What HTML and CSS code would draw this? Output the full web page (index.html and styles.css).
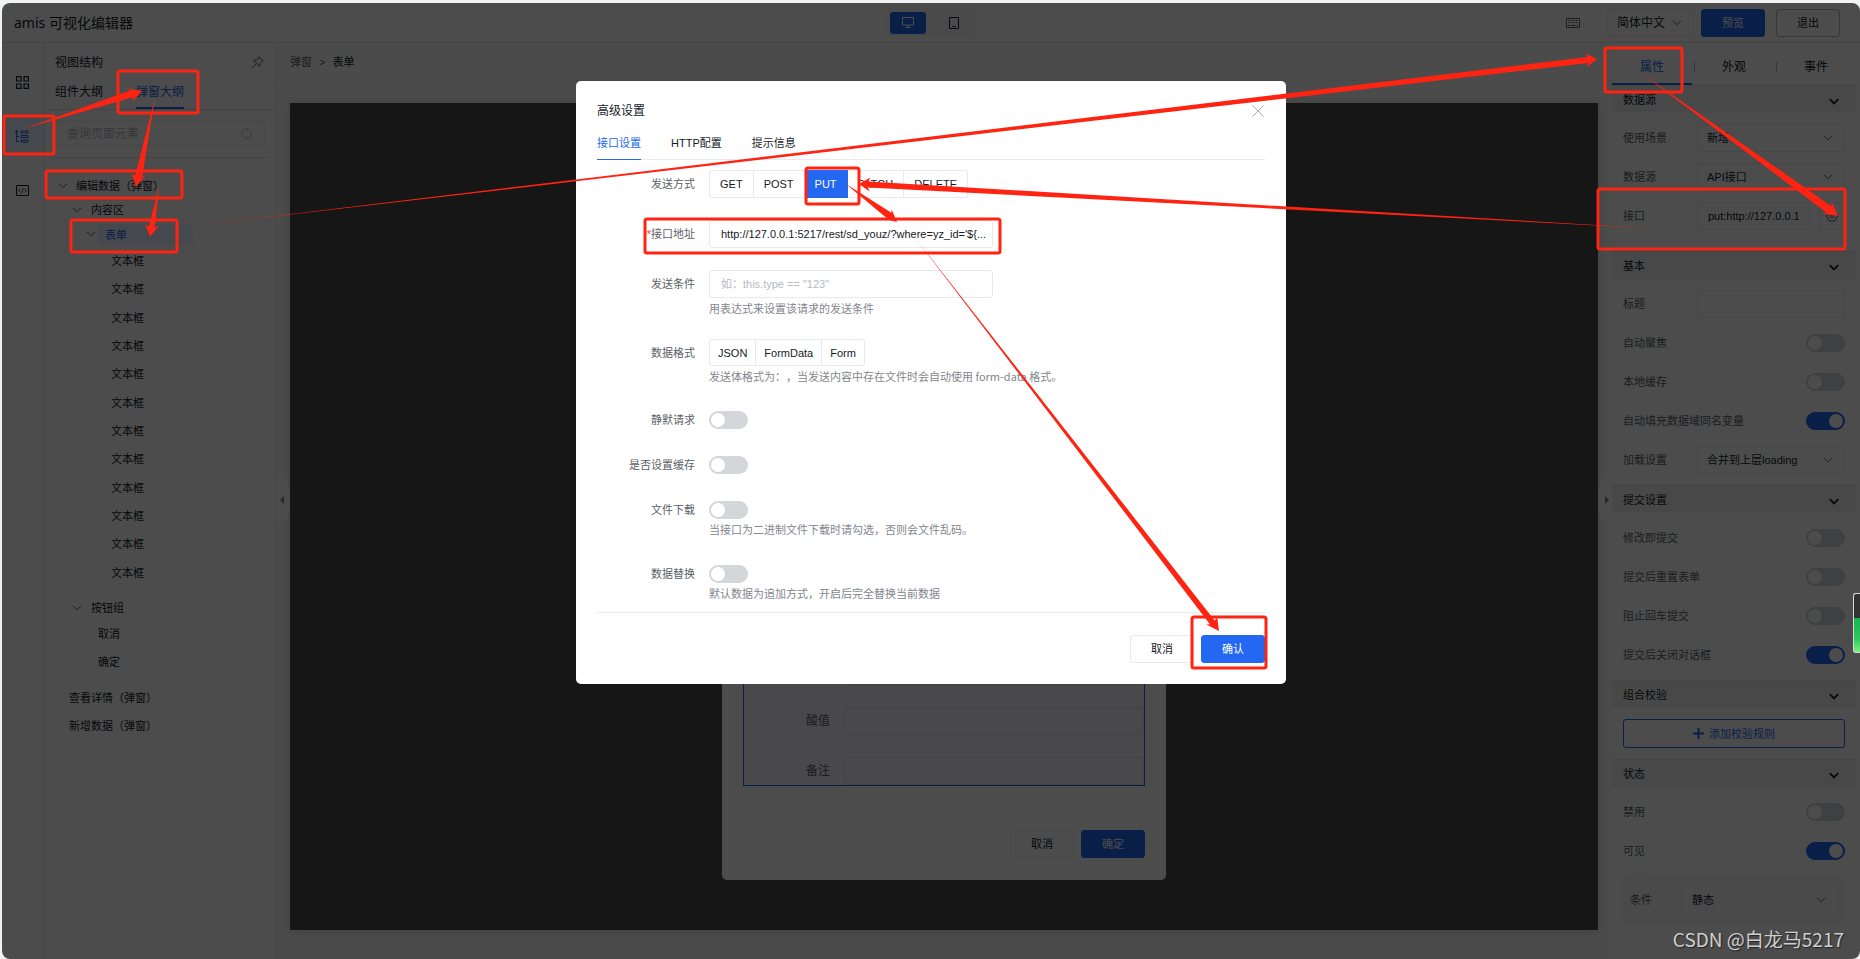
FILE: index.html
```html
<!DOCTYPE html>
<html lang="zh-CN">
<head>
<meta charset="utf-8">
<title>amis 可视化编辑器</title>
<link rel="stylesheet" href="styles.css">
</head>
<body>
<svg class="defs" aria-hidden="true">
  <symbol id="chev" viewBox="0 0 10 6"><path d="M1 .8 5 4.8 9 .8" fill="none" stroke="currentColor"/></symbol>
  <symbol id="chev-bold" viewBox="0 0 10 7"><path d="M.8 1.2 5 5.4 9.200 1.200" fill="none" stroke="currentColor" stroke-width="1.8"/></symbol>
</svg>
<div class="frame">
  <header class="topbar">
    <h1 class="brand">amis 可视化编辑器</h1>
    <div class="device">
      <button class="device-btn on" aria-label="桌面"><svg width="12" height="11" viewBox="0 0 12 11" fill="none" stroke="currentColor"><path d="M.5 .5h11v7.500H.5zM6 8v2.500M3.500 10.500h5"/></svg></button>
      <button class="device-btn" aria-label="平板"><svg width="10" height="12" viewBox="0 0 10 12" fill="none" stroke="currentColor"><path d="M.5 .5h9v11h-9zM3.500 9.500h3"/></svg></button>
    </div>
    <div class="top-actions">
      <svg class="keyboard" width="14" height="10" viewBox="0 0 14 10" fill="none" stroke="currentColor"><path d="M.5 .5h13v9H.5z"/><path d="M2 2.500h10M2 4.500h10" stroke-dasharray="1 .6"/><path d="M2 7.500h1.500M4.500 7.500h5M10.500 7.500H12"/></svg>
      <div class="select lang"><select aria-label="语言"><option>简体中文</option></select><svg class="caret" width="10" height="6"><use href="#chev"/></svg></div>
      <button class="btn primary">预览</button>
      <button class="btn exit">退出</button>
    </div>
  </header>
  <div class="main">
    <nav class="rail">
      <button class="rail-btn" aria-label="组件"><svg width="13" height="13" viewBox="0 0 13 13" fill="none" stroke="currentColor" stroke-width="1.200"><path d="M.6 .6h4.400v4.400H.6zM8 .6h4.400v4.400H8zM.6 8h4.400v4.400H.6zM8 8h4.400v4.400H8z"/></svg></button>
      <button class="rail-btn on" aria-label="大纲"><svg width="14" height="13" viewBox="0 0 14 13" fill="none" stroke="currentColor"><path d="M1.500 1v10.500H4M1.500 6.500H4M6 1h7v2H6zM6 5.500h7v2H6zM6 10h7v2H6z"/><circle cx="1.500" cy="1.500" r="1" fill="currentColor"/></svg></button>
      <button class="rail-btn" aria-label="代码"><svg width="13" height="11" viewBox="0 0 13 11" fill="none" stroke="currentColor"><path d="M.5 .5h12v10H.5z"/><path stroke-width=".8" d="M4.300 3.700l-1.800 1.800 1.800 1.800M8.700 3.700l1.800 1.800-1.800 1.800M7.200 3.200 5.800 7.800"/></svg></button>
    </nav>
    <aside class="outline">
      <div class="outline-head"><h2>视图结构</h2><svg width="13" height="13" viewBox="0 0 13 13" fill="none" stroke="currentColor"><path d="M8 .8 12.200 5 10.800 5.700 9 7.500 8.600 10.400 2.600 4.400 5.500 4 7.300 2.200zM5.500 7.500.8 12.200"/></svg></div>
      <div class="outline-tabs"><button>组件大纲</button><button class="on">弹窗大纲</button></div>
      <label class="search"><input type="text" placeholder="查询页面元素" aria-label="查询页面元素"><svg width="12" height="12" viewBox="0 0 12 12" fill="none" stroke="currentColor"><circle cx="5.500" cy="5.500" r="4.700"/><path d="m9 9 2 2"/></svg></label>
      <div class="tree">
        <div class="node d1"><svg width="10" height="6"><use href="#chev"/></svg><span>编辑数据（弹窗）</span></div>
        <div class="node d2"><svg width="10" height="6"><use href="#chev"/></svg><span>内容区</span></div>
        <div class="node d3"><svg width="10" height="6"><use href="#chev"/></svg><span class="current">表单</span></div>
        <ul class="fields"><li>文本框</li><li>文本框</li><li>文本框</li><li>文本框</li><li>文本框</li><li>文本框</li><li>文本框</li><li>文本框</li><li>文本框</li><li>文本框</li><li>文本框</li><li>文本框</li></ul>
        <div class="node d2 group"><svg width="10" height="6"><use href="#chev"/></svg><span>按钮组</span></div>
        <ul class="actions"><li>取消</li><li>确定</li></ul>
        <ul class="dialogs"><li>查看详情（弹窗）</li><li>新增数据（弹窗）</li></ul>
      </div>
    </aside>
    <section class="workspace">
      <div class="crumbs"><span>弹窗</span><span>&gt;</span><b>表单</b></div>
      <button class="handle left" aria-label="收起左侧"></button>
      <button class="handle right" aria-label="收起右侧"></button>
      <div class="stage">
        <div class="preview">
          <div class="preview-form">
            <div class="preview-row"><input id="p0" aria-label="文本框"></div>
            <div class="preview-row"><label for="p1">酸值</label><input id="p1"></div>
            <div class="preview-row"><label for="p2">备注</label><input id="p2"></div>
          </div>
          <div class="preview-foot"><button class="btn">取消</button><button class="btn primary">确定</button></div>
        </div>
      </div>
    </section>
    <aside class="props">
      <div class="props-tabs"><button class="on">属性</button><button>外观</button><button>事件</button></div>
      <section class="sec data">
        <h3>数据源<svg width="10" height="7"><use href="#chev-bold"/></svg></h3>
        <div class="sec-body">
          <div class="row"><label for="scene">使用场景</label><div class="select"><select id="scene"><option>新增</option></select><svg class="caret" width="10" height="6"><use href="#chev"/></svg></div></div>
          <div class="row"><label for="source">数据源</label><div class="select"><select id="source"><option>API接口</option></select><svg class="caret" width="10" height="6"><use href="#chev"/></svg></div></div>
          <div class="row"><label for="api">接口</label><div class="api"><input id="api" value="put:http://127.0.0.1"><button aria-label="接口设置"><svg width="12" height="12" viewBox="0 0 12 12" fill="none" stroke="currentColor"><path d="M3.200 1h5.600l2.700 5-2.700 5H3.200L.5 6z"/><circle cx="6" cy="6" r="1.800"/></svg></button></div></div>
        </div>
      </section>
      <section class="sec">
        <h3>基本<svg width="10" height="7"><use href="#chev-bold"/></svg></h3>
        <div class="sec-body">
          <div class="row"><label for="ttl">标题</label><input class="text" id="ttl"></div>
          <div class="row"><label for="s1">自动聚焦</label><input id="s1" type="checkbox" class="switch"></div>
          <div class="row"><label for="s2">本地缓存</label><input id="s2" type="checkbox" class="switch"></div>
          <div class="row"><label for="s3">自动填充数据域同名变量</label><input id="s3" type="checkbox" class="switch" checked></div>
          <div class="row"><label for="load">加载设置</label><div class="select"><select id="load"><option>合并到上层loading</option></select><svg class="caret" width="10" height="6"><use href="#chev"/></svg></div></div>
        </div>
      </section>
      <section class="sec">
        <h3>提交设置<svg width="10" height="7"><use href="#chev-bold"/></svg></h3>
        <div class="sec-body">
          <div class="row"><label for="s4">修改即提交</label><input id="s4" type="checkbox" class="switch"></div>
          <div class="row"><label for="s5">提交后重置表单</label><input id="s5" type="checkbox" class="switch"></div>
          <div class="row"><label for="s6">阻止回车提交</label><input id="s6" type="checkbox" class="switch"></div>
          <div class="row"><label for="s7">提交后关闭对话框</label><input id="s7" type="checkbox" class="switch" checked></div>
        </div>
      </section>
      <section class="sec">
        <h3>组合校验<svg width="10" height="7"><use href="#chev-bold"/></svg></h3>
        <div class="sec-body"><button class="add"><svg width="11" height="11" viewBox="0 0 11 11" stroke="currentColor" stroke-width="2"><path d="M5.500 0v11M0 5.500h11"/></svg>添加校验规则</button></div>
      </section>
      <section class="sec">
        <h3>状态<svg width="10" height="7"><use href="#chev-bold"/></svg></h3>
        <div class="sec-body">
          <div class="row"><label for="s8">禁用</label><input id="s8" type="checkbox" class="switch"></div>
          <div class="row"><label for="s9">可见</label><input id="s9" type="checkbox" class="switch" checked></div>
          <div class="cond"><label for="cond">条件</label><div class="select"><select id="cond"><option>静态</option></select><svg class="caret" width="10" height="6"><use href="#chev"/></svg></div></div>
        </div>
      </section>
    </aside>
  </div>

  <div class="mask">
    <div class="modal" role="dialog" aria-labelledby="modal-title">
      <div class="modal-head"><h2 id="modal-title">高级设置</h2><button class="close" aria-label="关闭"><svg width="12" height="12" viewBox="0 0 12 12" stroke="currentColor"><path d="M.5 .5l11 11M11.500 .5l-11 11"/></svg></button></div>
      <div class="modal-tabs"><button class="on">接口设置</button><button>HTTP配置</button><button>提示信息</button></div>
      <form class="form">
        <div class="field"><span class="lab">发送方式</span><div class="seg method"><button type="button">GET</button><button type="button">POST</button><button type="button" class="on">PUT</button><button type="button">PATCH</button><button type="button">DELETE</button></div></div>
        <div class="field"><label class="lab req" for="url">接口地址</label><div class="inp"><input id="url" value="http://127.0.0.1:5217/rest/sd_youz/?where=yz_id='${..."></div></div>
        <div class="field has-help"><label class="lab" for="when">发送条件</label><div class="inp"><input id="when" placeholder="如：this.type == &quot;123&quot;"><p>用表达式来设置该请求的发送条件</p></div></div>
        <div class="field has-help body-type"><span class="lab">数据格式</span><div><div class="seg format"><button type="button">JSON</button><button type="button">FormData</button><button type="button">Form</button></div><p>发送体格式为：，当发送内容中存在文件时会自动使用 form-data 格式。</p></div></div>
        <div class="field sw"><label class="lab" for="m1">静默请求</label><div><input id="m1" type="checkbox" class="switch"></div></div>
        <div class="field sw"><label class="lab" for="m2">是否设置缓存</label><div><input id="m2" type="checkbox" class="switch"></div></div>
        <div class="field sw has-help"><label class="lab" for="m3">文件下载</label><div><input id="m3" type="checkbox" class="switch"><p>当接口为二进制文件下载时请勾选，否则会文件乱码。</p></div></div>
        <div class="field sw has-help"><label class="lab" for="m4">数据替换</label><div><input id="m4" type="checkbox" class="switch"><p>默认数据为追加方式，开启后完全替换当前数据</p></div></div>
      </form>
      <div class="modal-foot"><button class="btn">取消</button><button class="btn primary">确认</button></div>
    </div>
  </div>
</div>

<div class="meter" aria-hidden="true"></div>
<svg class="notes" width="1860" height="959" viewBox="0 0 1860 959" aria-hidden="true">
  <g class="boxes">
    <rect x="4" y="116" width="50" height="38" rx="2"/>
    <rect x="118" y="71" width="80" height="42" rx="2"/>
    <rect x="46" y="171" width="136" height="27" rx="2"/>
    <rect x="71" y="220" width="106" height="32" rx="2"/>
    <rect x="645" y="219" width="355" height="34" rx="2"/>
    <rect x="806" y="168" width="53" height="36" rx="2"/>
    <rect x="1192" y="617" width="74" height="51" rx="2"/>
    <rect x="1605" y="48" width="77" height="44" rx="2"/>
    <rect x="1598" y="189" width="247" height="60" rx="2"/>
  </g>
  <g class="arrows">
    <path transform="translate(142 91) rotate(-17.7)" d="M0 0-14-7-11-4-125 0-11 3-12 7z"/>
    <path transform="translate(136 187) rotate(102)" d="M0 0-14-7-11-4-91 0-11 3-12 7z"/>
    <path transform="translate(150 237) rotate(100.2)" d="M0 0-13-7-10-3-51 0-10 3-12 7z"/>
    <path transform="translate(1597 59) rotate(-6.78)" d="M0 0-11-7-9-3-1414 0-9 3-11 7z"/>
    <path transform="translate(1838 216) rotate(36)" d="M0 0-14-8-11-4-245 0-11 4-14 7z"/>
    <path transform="translate(859 184) rotate(183.200)" d="M0 0-11-7-9-3-797 0-9 3-11 7z"/>
    <path transform="translate(897 222) rotate(36.700)" d="M0 0-12-7-10-4-64 0-10 3-12 5z"/>
    <path transform="translate(1219 631) rotate(52.300)" d="M0 0-12-7-11-3-497 0-11 3-13 6z"/>
  </g>
</svg>
<div class="watermark">CSDN @白龙马5217</div>
</body>
</html>
```
FILE: styles.css
```css
* { box-sizing: border-box; }
body {
  margin: 0;
  padding: 3px 0 0 2px;
  background: #f1f2f2;
  color: #151b26;
  font: 11px/16px "Liberation Sans", "Noto Sans CJK SC", sans-serif;
  text-spacing-trim: space-all;
}
button, input, select { font: inherit; color: inherit; margin: 0; outline: 0; }
button { background: none; border: 0; padding: 0; white-space: nowrap; }
h1, h2, h3, p, ul { margin: 0; padding: 0; font-weight: 400; list-style: none; }
svg { flex: none; display: block; }
.defs { position: absolute; width: 0; height: 0; }

.frame {
  position: relative;
  display: flex;
  flex-direction: column;
  height: calc(100vh - 3px);
  border-radius: 8px;
  overflow: hidden;
  background: #fff;
}

/* top bar */
.topbar {
  display: grid;
  grid-template-columns: 1fr auto 1fr;
  align-items: center;
  height: 40px;
  padding: 0 20px 0 12px;
  border-bottom: 1px solid #e4e5e7;
}
.brand { font: 14px/20px "Noto Sans", "Noto Sans CJK SC", sans-serif; }
.device { display: flex; gap: 10px; padding: 3px; margin-left: 8px; border-radius: 4px; background: #f7f7f9; }
.device-btn { display: grid; place-items: center; width: 36px; height: 22px; border-radius: 3px; }
.device-btn.on { background: #2468f2; color: #fff; }
.top-actions { display: flex; justify-content: flex-end; align-items: center; }
.keyboard { margin-right: 27px; color: #5c5f66; }
.lang { width: 87px; margin-right: 7px; font-size: 12px; }
.top-actions .exit { margin-left: 11px; border-color: #b8babf; }

.btn {
  width: 64px;
  height: 28px;
  border: 1px solid #e8e9eb;
  border-radius: 3px;
  background: transparent;
}
.btn.primary { background: #2468f2; border-color: #2468f2; color: #fff; }

.select { position: relative; height: 28px; }
.select select {
  appearance: none;
  width: 100%;
  height: 100%;
  padding: 0 24px 0 9px;
  border: 1px solid #e8e9eb;
  border-radius: 3px;
  background: transparent;
}
.caret { position: absolute; right: 12px; top: 11px; color: #5c5f66; pointer-events: none; }

.switch {
  appearance: none;
  display: block;
  width: 39px;
  height: 18px;
  padding: 2px;
  border-radius: 9px;
  background: #d4d6d9;
}
.switch::before { content: ""; display: block; width: 14px; height: 14px; border-radius: 50%; background: #fff; }
.switch:checked { background: #2468f2; }
.switch:checked::before { margin-left: auto; }

.main { flex: 1; display: flex; min-height: 0; }

/* icon rail */
.rail { width: 43px; padding-top: 20px; border-right: 1px solid #e4e5e7; display: flex; flex-direction: column; gap: 16px; flex: none; }
.rail-btn { display: grid; place-items: center; height: 38px; width: 100%; padding-right: 2px; }
.rail-btn.on { background: #e6f0ff; color: #2468f2; }

/* outline panel */
.outline { width: 231px; flex: none; padding-top: 10px; border-right: 1px solid #eee; }
.outline-head { display: flex; justify-content: space-between; align-items: center; height: 19px; padding: 0 11px 0 10px; color: #5c5f66; }
.outline-head h2 { font-size: 12px; color: #151b26; }
.outline-tabs { display: flex; gap: 33px; height: 38px; padding: 0 10px; border-bottom: 1px solid #e4e5e7; font-size: 12px; }
.outline-tabs button { padding-top: 4px; border-bottom: 2px solid transparent; }
.outline-tabs .on { color: #2468f2; border-color: #2468f2; }
.search { display: flex; align-items: center; height: 25px; margin: 11px 10px; padding: 0 11px; border: 1px solid #e8e9eb; border-radius: 3px; color: #b8babf; font-size: 12px; }
.search input { flex: 1; min-width: 0; border: 0; padding: 0; background: none; }
.search input::placeholder { color: #b8babf; }
.tree { margin: 0 5px; padding-top: 16px; border-top: 1px solid #e4e5e7; }
.node { display: flex; align-items: center; height: 24px; color: #5c5f66; }
.node span { color: #151b26; }
.d1 { padding-left: 8px; gap: 8px; }
.d2 { padding-left: 22px; gap: 9px; }
.d3 { padding-left: 36px; gap: 2px; }
.node .current { width: 95px; padding: 3px 7px 2px; border-radius: 3px; background: #e6f0ff; color: #2468f2; }
.fields { display: grid; grid-template-rows: repeat(12, 1fr); align-items: center; height: 340px; margin-top: 1px; padding-left: 61px; }
.group { margin-top: 9px; }
.actions { padding-left: 48px; line-height: 28px; }
.dialogs { margin-top: 8px; padding-left: 19px; line-height: 28px; }

/* workspace */
.workspace { position: relative; flex: 1; min-width: 0; display: flex; flex-direction: column; background: #fafafa; }
.crumbs { display: flex; align-items: center; gap: 7px; height: 38px; padding-left: 14px; border-bottom: 1px solid #eeeff0; color: #5c5f66; }
.crumbs b { color: #151b26; font-weight: 400; }
.stage {
  flex: 1;
  display: flex;
  justify-content: center;
  align-items: flex-end;
  margin: 22px 14px 29px;
  padding-bottom: 50px;
  background: #4b4b4b;
  box-shadow: 0 2px 10px #d4d4d4;
}
.preview { width: 444px; padding: 21px 21px 22px; border-radius: 5px; background: #fff; }
.preview-form { display: flex; flex-direction: column; gap: 22px; border: 1px solid #2468f2; background: #f5f6fa; padding-top: 21px; }
.preview-row { display: flex; align-items: center; justify-content: flex-end; gap: 14px; color: #5c5f66; }
.preview-row label { font-size: 12px; }
.preview-row input { width: 300px; height: 28px; border: 1px solid #e0e1e4; border-radius: 3px; background: transparent; }
.preview-foot { display: flex; justify-content: flex-end; gap: 7px; margin-top: 44px; }
.handle { position: absolute; top: 433px; width: 13px; height: 47px; background: #fff; }
.handle::before { content: ""; display: block; width: 4px; border: 4px solid transparent; }
.handle.left { left: 0; border-radius: 0 13px 13px 0; }
.handle.right { right: 0; border-radius: 13px 0 0 13px; }
.handle.left::before { border-left-width: 0; border-right-color: #84868c; }
.handle.right::before { border-right-width: 0; border-left-color: #84868c; margin-left: 6px; }

/* property panel */
.props { width: 248px; flex: none; padding-right: 4px; box-shadow: -1px 0 5px #e4e4e4; }
.props-tabs { display: grid; grid-template-columns: repeat(3, 1fr); gap: 2px; height: 42px; font-size: 12px; }
.props-tabs button { position: relative; padding-top: 8px; border-bottom: 2px solid transparent; }
.props-tabs .on { color: #2468f2; border-color: #2468f2; }
.props-tabs button + button::before { content: ""; position: absolute; left: 0; top: 19px; height: 10px; border-left: 1px solid #b8babf; }
.sec h3 { display: flex; justify-content: space-between; align-items: center; height: 28px; padding: 0 17px 0 11px; background: #f2f2f4; border-top: 1px solid #e4e5e7; font-size: 11px; line-height: 16px; }
.sec h3 svg { margin-top: 4px; }
.sec-body { display: flex; flex-direction: column; gap: 11px; padding: 11px; }
.data .sec-body { padding-bottom: 21px; }
.row { display: flex; justify-content: space-between; align-items: center; height: 28px; color: #5c5f66; }
.row .select, .row .text, .api { width: 148px; color: #151b26; }
.text, .api input { height: 28px; border: 1px solid #e8e9eb; border-radius: 3px; background: transparent; }
.api { display: flex; gap: 9px; }
.api input { width: 113px; padding: 0 10px; }
.api button { flex: 1; display: grid; place-items: center; border: 1px solid #e8e9eb; border-radius: 3px; color: #5c5f66; }
.add { display: flex; justify-content: center; align-items: center; gap: 5px; height: 29px; border: 1px solid #2468f2; border-radius: 3px; color: #2468f2; }
.cond { position: relative; display: flex; align-items: center; justify-content: space-between; height: 48px; padding: 0 7px; background: #f7f7f9; color: #5c5f66; }
.cond::before { content: ""; position: absolute; left: 8px; top: -8px; border: 8px solid transparent; border-top: 0; border-bottom-color: #f7f7f9; }
.cond .select { width: 156px; color: #151b26; }

/* modal */
.mask { position: absolute; inset: 0; display: flex; justify-content: center; align-items: flex-start; padding-top: 78px; background: rgba(0, 0, 0, .7); }
.modal { width: 710px; padding: 20px 21px 21px; border-radius: 5px; background: #fff; }
.modal-head { display: flex; justify-content: space-between; align-items: center; height: 20px; }
.modal-head h2 { font-size: 12px; line-height: 20px; }
.close { padding-right: 1px; color: #a8aab0; }
.modal-tabs { display: flex; gap: 30px; height: 39px; border-bottom: 1px solid #e8e9eb; }
.modal-tabs button { padding-top: 6px; margin-bottom: -1px; border-bottom: 1px solid transparent; }
.modal-tabs .on { color: #2468f2; border-color: #2468f2; }
.form { display: flex; flex-direction: column; padding-top: 10px; }
.field { display: flex; align-items: flex-start; gap: 14px; height: 50px; }
.field.has-help { height: 69px; }
.field.body-type { height: 72px; }
.field .lab { width: 98px; text-align: right; line-height: 28px; color: #5c5f66; }
.req::before { content: "*"; color: #f33e3e; }
.inp { width: 284px; }
.inp input { display: block; width: 100%; height: 28px; padding: 0 4px 0 11px; border: 1px solid #e8e9eb; border-radius: 3px; }
.inp input::placeholder { color: #b8babf; }
.field p { padding-top: 2px; color: #84868c; font-family: "Noto Sans CJK SC", sans-serif; white-space: nowrap; }
.seg { display: flex; }
.seg button { height: 28px; padding: 0 10px; border: 1px solid #e8e9eb; }
.seg button + button { border-left-width: 0; }
.seg button:first-child { border-radius: 3px 0 0 3px; }
.seg button:last-child { border-radius: 0 3px 3px 0; }
.seg .on { background: #2468f2; border-color: #2468f2; color: #fff; }
.format button { height: 27px; padding: 0 8px; }
.field.sw { height: 45px; }
.field.sw.has-help { height: 64px; }
.field.sw .lab { line-height: 18px; }
.field.sw.has-help:last-child { height: 47px; }
.modal-foot { display: flex; justify-content: flex-end; gap: 7px; padding-top: 22px; border-top: 1px solid #e8e9eb; }

/* marks above the page */
.notes { position: absolute; left: 0; top: 0; pointer-events: none; }
.boxes { fill: none; stroke: #ff2312; stroke-width: 3; }
.arrows { fill: #ff2312; }
.meter { position: absolute; right: 0; top: 593px; width: 7px; height: 60px; border: 1px solid #d8d8d8; border-right: 0; border-radius: 3px 0 0 3px; background: linear-gradient(#333 24px, #16b455 24px, #2fc95f 45px, #7af07c); }
.watermark { position: absolute; right: 16px; bottom: 6px; color: #cfcfcf; font: 19px/28px "Noto Sans CJK SC", sans-serif; text-shadow: 1px 1px 1px #222; }
```
